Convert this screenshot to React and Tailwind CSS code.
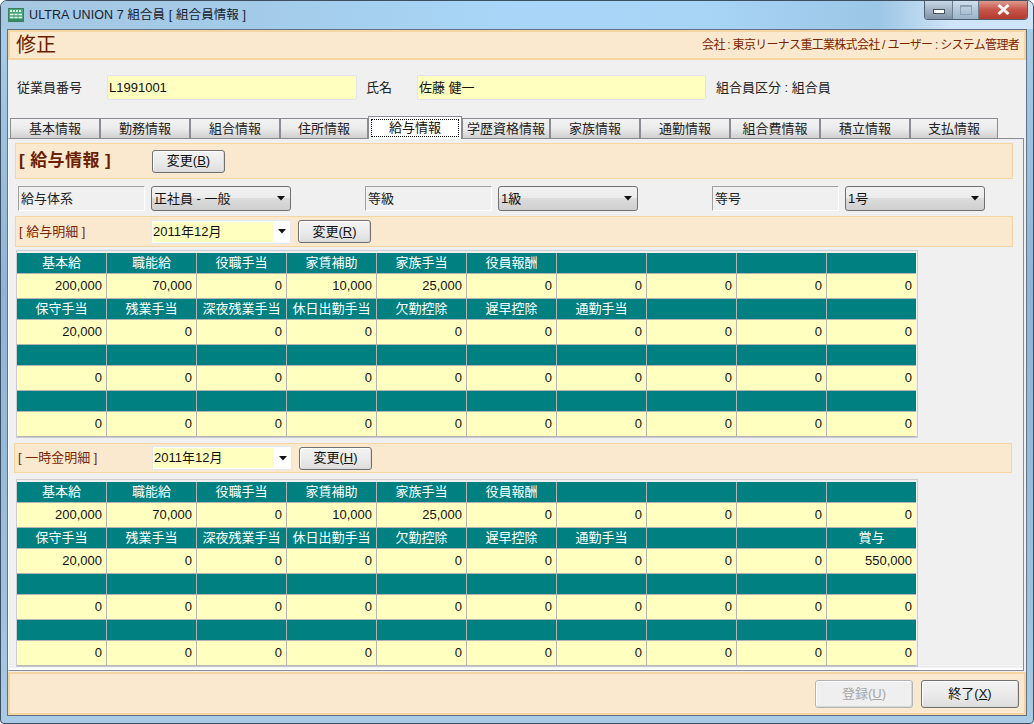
import React from 'react';

const FONT = '"Liberation Sans", "Noto Sans CJK JP", sans-serif';
const TABS = [
  ['基本情報', 90], ['勤務情報', 90], ['組合情報', 90], ['住所情報', 88], ['給与情報', 94], ['学歴資格情報', 88],
  ['家族情報', 90], ['通勤情報', 90], ['組合費情報', 90], ['積立情報', 90], ['支払情報', 88],
];
const ROWS = [
  { heads: ['基本給', '職能給', '役職手当', '家賃補助', '家族手当', '役員報酬', '', '', '', ''], vals: ['200,000', '70,000', '0', '10,000', '25,000', '0', '0', '0', '0', '0'] },
  { heads: ['保守手当', '残業手当', '深夜残業手当', '休日出勤手当', '欠勤控除', '遅早控除', '通勤手当', '', '', ''], vals: ['20,000', '0', '0', '0', '0', '0', '0', '0', '0', '0'] },
  { heads: ['', '', '', '', '', '', '', '', '', ''], vals: ['0', '0', '0', '0', '0', '0', '0', '0', '0', '0'] },
  { heads: ['', '', '', '', '', '', '', '', '', ''], vals: ['0', '0', '0', '0', '0', '0', '0', '0', '0', '0'] },
];
const BONUS_ROWS = ROWS.map((r, i) =>
  i === 1 ? { heads: [...r.heads.slice(0, 9), '賞与'], vals: [...r.vals.slice(0, 9), '550,000'] } : r
);

function Arrow() {
  return (
    <svg width="9" height="5" viewBox="0 0 9 5" className="shrink-0">
      <path d="M0 0h8L4 4.5z" fill="#111" />
    </svg>
  );
}

function Btn({ label, hot, w = 'w-[73px]', h = 'h-[23px]', disabled }) {
  return (
    <div className={`${w} ${h} flex items-center justify-center rounded-[3px] border text-[13px] shadow-[inset_1px_1px_0_#fff,inset_-1px_-1px_0_#d8d8d8] ${disabled ? 'border-[#b0b4b8] text-[#a6a6a6] bg-[#efefef]' : 'border-[#707070] text-[#111] bg-[linear-gradient(#f3f3f3,#ebebeb_50%,#dddddd)]'}`}>
      {label}(<u>{hot}</u>)
    </div>
  );
}

function Combo({ label }) {
  return (
    <div className="w-[140px] h-[25px] flex items-center justify-between pl-[2px] pr-[4px] rounded-[3px] border border-[#707070] text-[13px] text-[#111] bg-[linear-gradient(#f2f2f2,#ebebeb_48%,#dcdcdc_50%,#cfcfcf)]">
      <span>{label}</span>
      <Arrow />
    </div>
  );
}

function DateCombo() {
  return (
    <div className="w-[140px] h-[24px] flex items-center p-[1px] pr-[3px] bg-white border border-[#e4e8ec] rounded-[1px] text-[13px] text-[#111]">
      <div className="flex-1 h-full bg-[#ffffc0] flex items-center mr-[5px]">2011年12月</div>
      <Arrow />
    </div>
  );
}

function LabelBox({ text }) {
  return (
    <div className="w-[127px] h-[25px] flex items-center pl-[2px] border-t border-l border-t-[#a0a0a0] border-l-[#a0a0a0] border-r border-b border-r-white border-b-white text-[13px] text-[#222]">
      {text}
    </div>
  );
}

function Field({ value, w }) {
  return (
    <div className={`${w} h-[25px] flex items-center pl-[1px] bg-[#ffffc0] border border-[#dfe4ea] rounded-[2px] text-[13px] text-[#111]`}>
      {value}
    </div>
  );
}

function PayGrid({ rows, mt }) {
  return (
    <div className={`${mt} ml-[1px] w-[902px] h-[188px] border border-[#c9cdd2] border-b-2 pt-[2px] bg-[#f0f0f0]`}>
      <div className="grid grid-cols-[repeat(10,89px)] auto-rows-auto gap-px bg-[#b4b4b4] w-[899px] border-b border-[#b4b4b4]">
        {rows.map((r, i) => (
          <React.Fragment key={i}>
            {r.heads.map((h, j) => (
              <div key={j} className="h-[20px] bg-[#008080] text-white text-[13px] leading-[19px] text-center whitespace-nowrap">{h}</div>
            ))}
            {r.vals.map((v, j) => (
              <div key={j} className="h-[24px] bg-[#ffffc0] text-[#111] text-[13px] leading-[24px] text-right pr-[4px]">{v}</div>
            ))}
          </React.Fragment>
        ))}
      </div>
    </div>
  );
}

export default function App() {
  return (
    <div
      className="w-[1034px] h-[724px] flex flex-col overflow-hidden rounded-t-[7px] rounded-b-[4px] border border-[#3d4f60] bg-[linear-gradient(#a9cfea,#8fb4d6_40%,#9cc0dd_80%,#a9cbe6)]"
      style={{ fontFamily: FONT }}
    >
      <div className="h-[28px] shrink-0 flex items-start pl-[7px] pr-[5px] bg-[linear-gradient(90deg,#a6c8e2,#a3cbe9_25%,#a9d6f8_50%,#a8d4f6_68%,#9cc6e6_85%,#cfe4f6_92%)]">
        <svg width="16" height="16" viewBox="0 0 16 16" className="mt-[6px]">
          <rect x="0.5" y="1.5" width="15" height="13" fill="#4ba57a" stroke="#3b7d5c" />
          <path d="M2 4h12" stroke="#d8efe2" strokeWidth="2" strokeDasharray="2 1" />
          <path d="M2 7.5h12M2 10.5h12" stroke="#e8f5ee" strokeWidth="1.4" />
          <path d="M6 6.5v6M10 6.5v6" stroke="#4ba57a" strokeWidth="1" />
          <rect x="1" y="12" width="14" height="2" fill="#2f8f62" />
        </svg>
        <span className="ml-[5px] mt-[5px] text-[12.5px] tracking-[0.1px] leading-[18px] text-[#16222e] whitespace-nowrap">ULTRA UNION 7 組合員 [ 組合員情報 ]</span>
        <div className="ml-auto flex h-[20px] -mt-px rounded-b-[4px] overflow-hidden border border-t-0 border-[#4d6072]">
          <div className="w-[28px] flex items-center justify-center border-r border-[#6b7f92] bg-[linear-gradient(#cfdce8,#a3b5c6_50%,#7f93a6)]">
            <div className="w-[12px] h-[5px] mt-[4px] bg-white border border-[#44515e]" />
          </div>
          <div className="w-[26px] flex items-center justify-center border-r border-[#6b7f92] bg-[linear-gradient(#d5e2ee,#b5c9da_50%,#9cb3c8)]">
            <div className="w-[12px] h-[10px] border border-[#8da0b2] border-t-2" />
          </div>
          <div className="w-[48px] flex items-center justify-center bg-[linear-gradient(#e0a49a,#c9564a_50%,#b23a2e)]">
            <svg width="15" height="11" viewBox="0 0 15 11">
              <path d="M2.5 1l10 9M12.5 1l-10 9" stroke="#f4f4f4" strokeWidth="3" />
            </svg>
          </div>
        </div>
      </div>

      <div className="mx-[6px] mb-[7px] flex-1 min-h-0 flex flex-col border border-[#5f7182] bg-[#f0f0f0]">
        <div className="h-[30px] shrink-0 flex items-center justify-between pl-[6px] pr-[5px] bg-[#fbe9cf] border-2 border-[#f5d6a2]">
          <span className="text-[20px] text-[#6b1e00]">修正</span>
          <span className="text-[12px] tracking-[-0.7px] text-[#7a2500] whitespace-nowrap">会社 : 東京リーナス重工業株式会社 / ユーザー : システム管理者</span>
        </div>

        <div className="mt-[15px] flex items-center h-[25px] pl-[9px] shrink-0">
          <span className="w-[90px] text-[13px] text-[#222]">従業員番号</span>
          <Field value="L1991001" w="w-[250px]" />
          <span className="w-[60px] pl-[9px] text-[13px] text-[#222]">氏名</span>
          <Field value="佐藤 健一" w="w-[289px]" />
          <span className="ml-[10px] text-[13px] text-[#222]">組合員区分 : 組合員</span>
        </div>

        <div className="mt-[16px] h-[22px] pl-[2px] flex items-end shrink-0">
          {TABS.map(([t, w]) =>
            t === '給与情報' ? (
              <div key={t} style={{ width: w }} className="h-[23px] -mb-px z-10 p-[2px] bg-white border border-b-0 border-[#898c95] text-[13px] text-[#111] text-center">
                <div className="h-[18px] leading-[16px] border border-dotted border-black">{t}</div>
              </div>
            ) : (
              <div key={t} style={{ width: w }} className="h-[20px] leading-[19px] border border-b-0 border-[#898c95] bg-[linear-gradient(#f3f3f3,#ebebeb_50%,#d0d0d0)] text-[13px] text-[#222] text-center whitespace-nowrap">{t}</div>
            )
          )}
        </div>

        <div className="flex-1 min-h-0 mr-[2px] mb-[1px] border border-[#898c95] border-l-white pl-[6px] pt-[4px] shadow-[inset_0_-2px_0_#fff]">
          <div className="w-[998px] h-[36px] flex items-center pl-[3px] bg-[#fbe9cf] border border-[#f5d6a2]">
            <span className="w-[133px] text-[17px] tracking-[0.4px] font-bold text-[#6b1e00] whitespace-nowrap">[ 給与情報 ]</span>
            <Btn label="変更" hot="B" />
          </div>

          <div className="mt-[7px] h-[25px] flex pl-[3px]">
            <LabelBox text="給与体系" />
            <div className="ml-[6px]"><Combo label="正社員 - 一般" /></div>
            <div className="ml-[74px]"><LabelBox text="等級" /></div>
            <div className="ml-[6px]"><Combo label="1級" /></div>
            <div className="ml-[74px]"><LabelBox text="等号" /></div>
            <div className="ml-[6px]"><Combo label="1号" /></div>
          </div>

          <div className="mt-[5px] w-[998px] h-[31px] flex items-center pl-[3px] bg-[#fbe9cf] border border-[#f5d6a2]">
            <span className="w-[132px] text-[13px] text-[#7a2500]">[ 給与明細 ]</span>
            <DateCombo />
            <div className="ml-[7px]"><Btn label="変更" hot="R" /></div>
          </div>
          <PayGrid rows={ROWS} mt="mt-[3px]" />

          <div className="mt-[5px] -ml-px w-[998px] h-[30px] flex items-center pl-[3px] bg-[#fbe9cf] border border-[#f5d6a2]">
            <span className="w-[134px] text-[13px] text-[#7a2500]">[ 一時金明細 ]</span>
            <DateCombo />
            <div className="ml-[7px]"><Btn label="変更" hot="H" /></div>
          </div>
          <PayGrid rows={BONUS_ROWS} mt="mt-[6px]" />
        </div>

        <div className="h-[43px] shrink-0 flex items-center justify-end gap-[8px] pr-[5px] bg-[#fbe9cf] border-2 border-[#f5d6a2]">
          <Btn label="登録" hot="U" w="w-[98px]" h="h-[28px]" disabled />
          <Btn label="終了" hot="X" w="w-[98px]" h="h-[28px]" />
        </div>
      </div>
    </div>
  );
}
